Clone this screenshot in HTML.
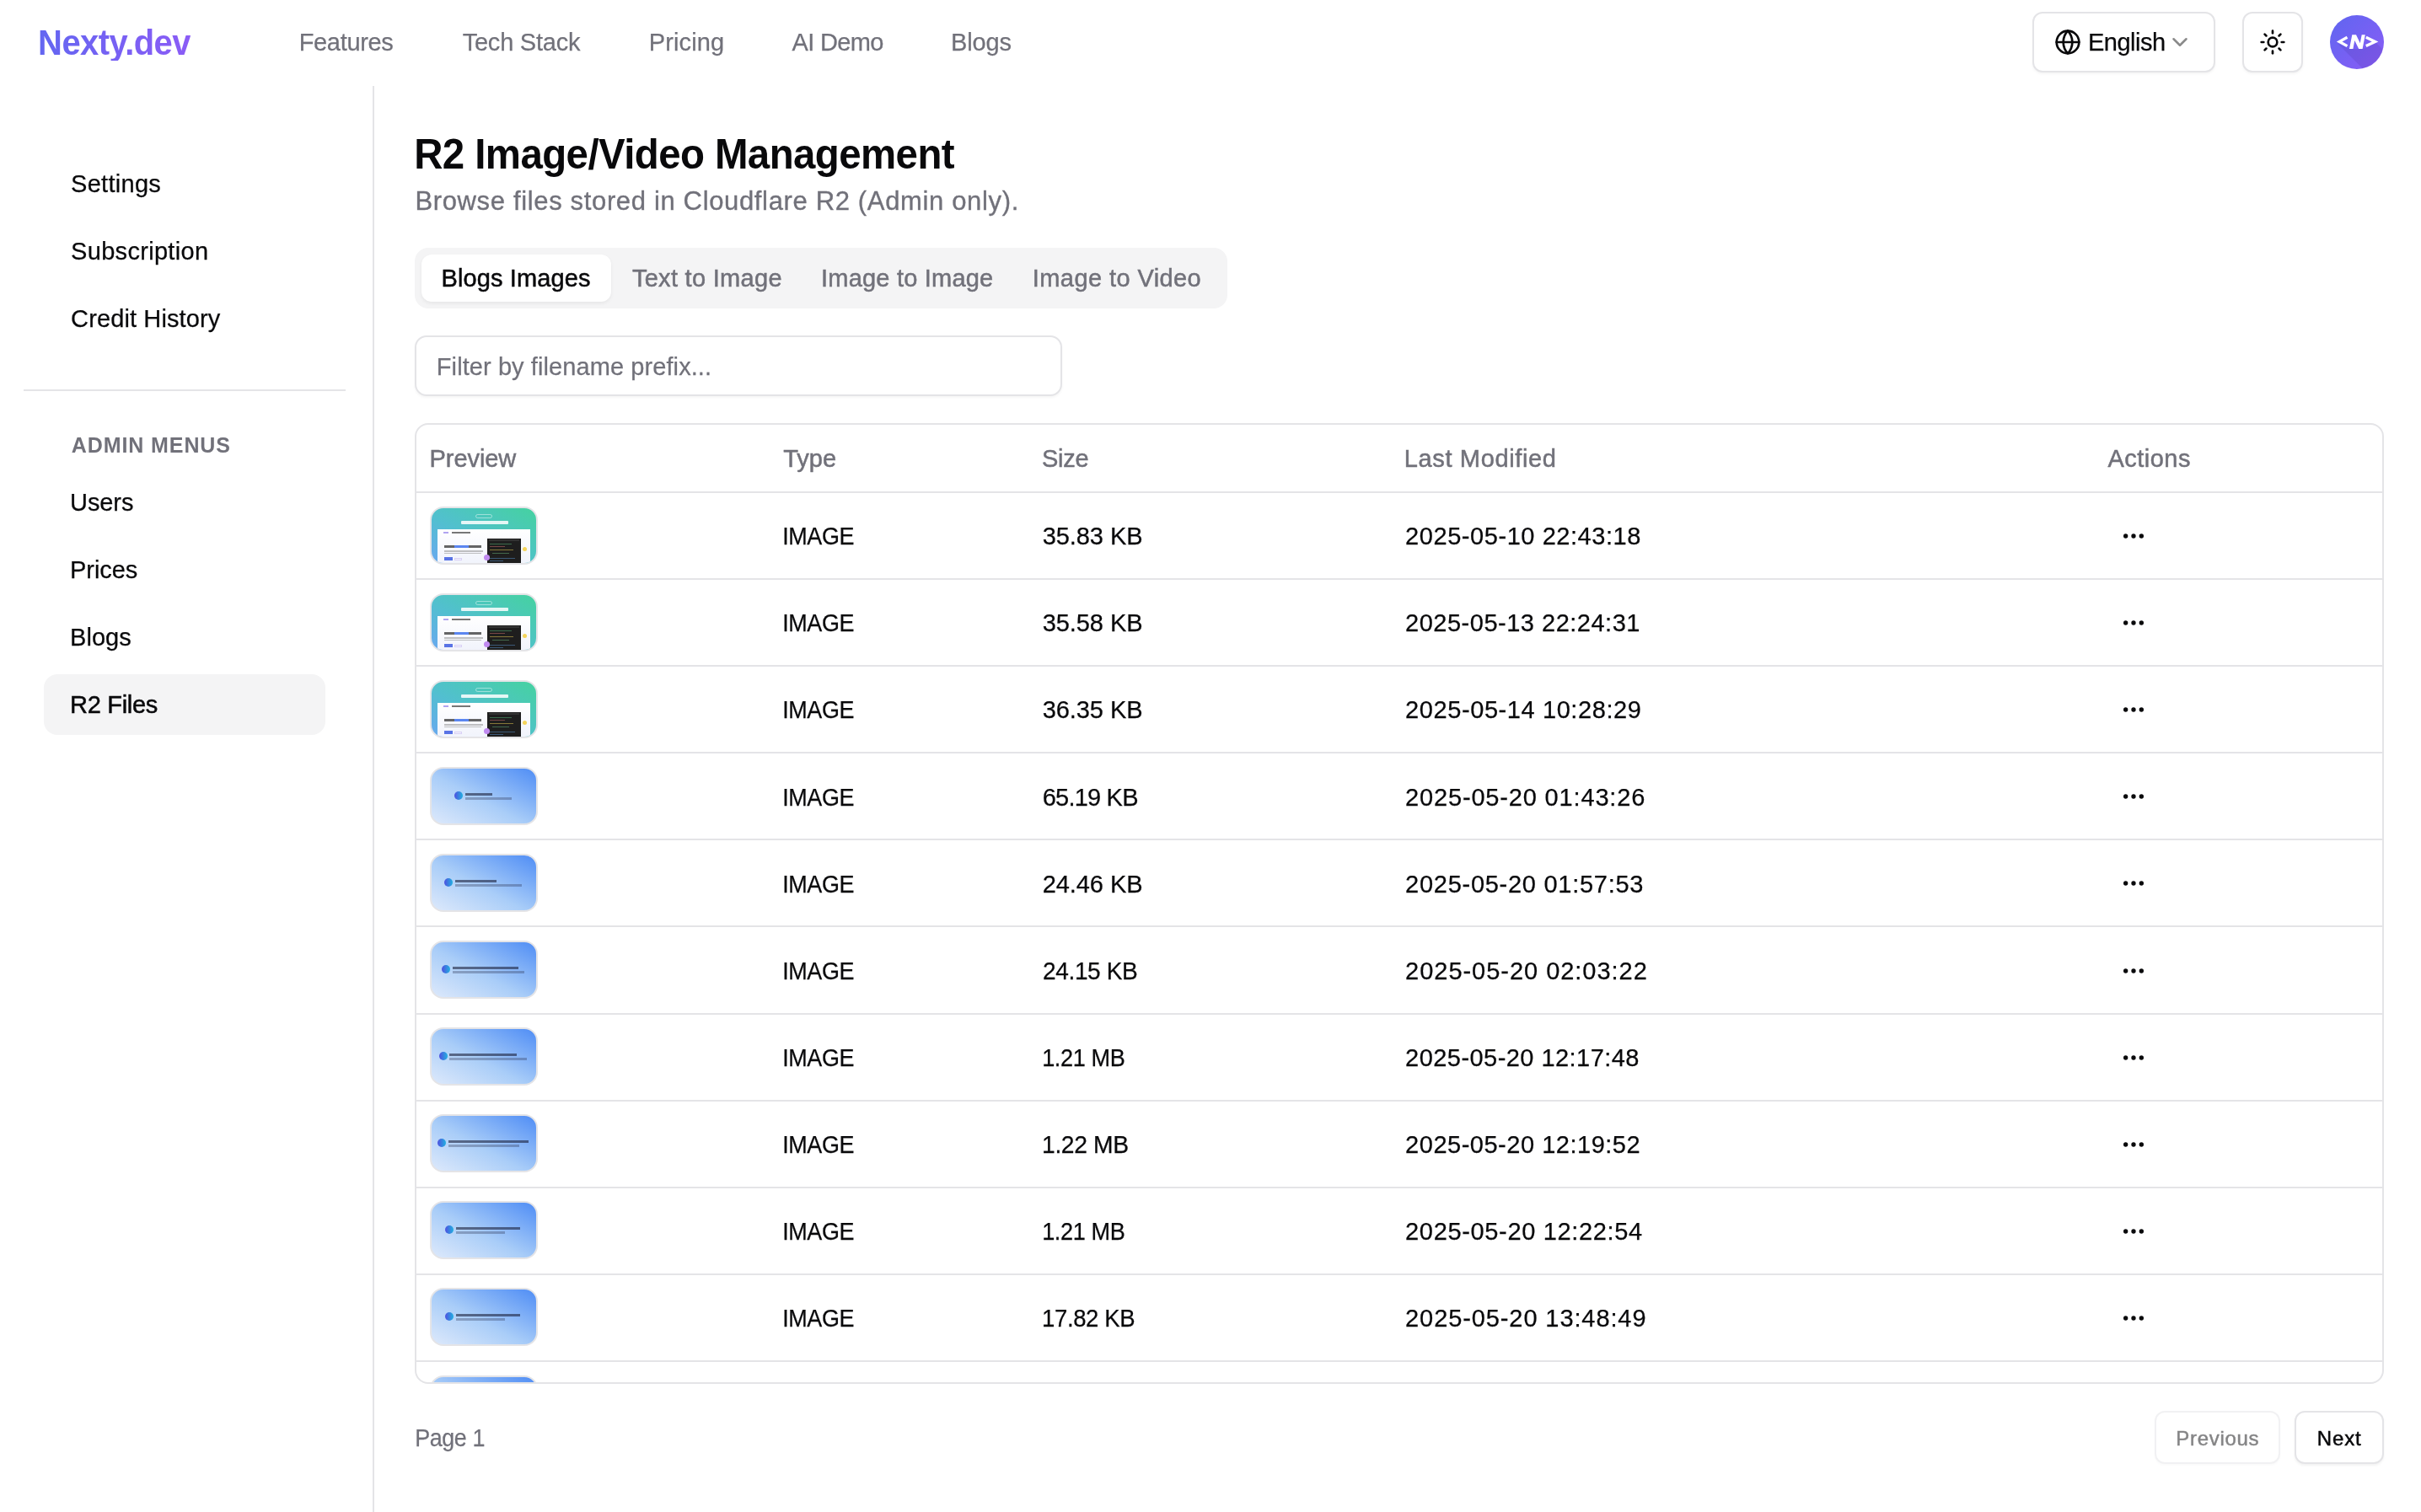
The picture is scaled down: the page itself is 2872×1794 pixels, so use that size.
<!DOCTYPE html><html><head><meta charset="utf-8"><style>
html,body{margin:0;padding:0;background:#fff;overflow:hidden;font-family:"Liberation Sans",sans-serif;}
#root{position:relative;width:2872px;height:1794px;overflow:hidden;will-change:transform;}
@media (max-width:2000px){#root{zoom:0.5;}}
.t{position:absolute;white-space:pre;}
.a{position:absolute;box-sizing:border-box;}
</style></head><body>
<div id="root">

<div class="a" style="left:2411px;top:14px;width:217px;height:72px;border:2px solid #e4e4e7;border-radius:12px;box-shadow:0 2px 3px rgba(0,0,0,0.04);background:#fff"></div>
<div class="a" style="left:2660px;top:14px;width:72px;height:72px;border:2px solid #e4e4e7;border-radius:12px;box-shadow:0 2px 3px rgba(0,0,0,0.04);background:#fff"></div>
<svg class="a" style="left:2437px;top:33.7px" width="32" height="32" viewBox="0 0 24 24" fill="none" stroke="#09090b" stroke-width="2" stroke-linecap="round" stroke-linejoin="round"><circle cx="12" cy="12" r="10"/><path d="M12 2a14.5 14.5 0 0 0 0 20 14.5 14.5 0 0 0 0-20"/><path d="M2 12h20"/></svg>
<svg class="a" style="left:2570.8px;top:34.7px" width="30" height="30" viewBox="0 0 24 24" fill="none" stroke="#8a8a8a" stroke-width="2" stroke-linecap="round" stroke-linejoin="round"><path d="m6 9 6 6 6-6"/></svg>
<svg class="a" style="left:2680px;top:33.6px" width="32" height="32" viewBox="0 0 24 24" fill="none" stroke="#09090b" stroke-width="2" stroke-linecap="round" stroke-linejoin="round"><circle cx="12" cy="12" r="4"/><path d="M12 2v2"/><path d="M12 20v2"/><path d="m4.93 4.93 1.41 1.41"/><path d="m17.66 17.66 1.41 1.41"/><path d="M2 12h2"/><path d="M20 12h2"/><path d="m6.34 17.66-1.41 1.41"/><path d="m19.07 4.93-1.41 1.41"/></svg>
<svg class="a" style="left:2764px;top:18px" width="64" height="64" viewBox="0 0 64 64">
<defs><linearGradient id="avg" x1="0" y1="0" x2="1" y2="1"><stop offset="0" stop-color="#5f66f0"/><stop offset="1" stop-color="#8b5cf6"/></linearGradient>
<clipPath id="avc"><circle cx="32" cy="32" r="32"/></clipPath></defs>
<circle cx="32" cy="32" r="32" fill="url(#avg)"/>
<g clip-path="url(#avc)"><polygon points="9,33.5 20,38.5 23,40 39,40 43,38.5 55,33 105,83 59,83.5" fill="#3a2590" opacity="0.15"/></g>
<g fill="none" stroke="#fff" stroke-width="3.3" stroke-linejoin="miter" stroke-linecap="butt">
<polyline points="20.5,26.2 11.2,31.4 20.5,36.6"/>
<polyline points="42.8,26.2 53.6,31.4 42.8,36.6"/>
</g>
<polygon fill="#fff" points="23.0,40 26.3,23.2 31.0,23.2 35.8,33.2 37.7,23.2 41.8,23.2 38.6,40 34.2,40 29.3,30.0 27.4,40"/>
</svg>
<div class="a" style="left:442px;top:102px;width:2px;height:1692px;background:#e4e4e7"></div>
<div class="a" style="left:28px;top:462px;width:382px;height:2px;background:#e4e4e7"></div>
<div class="a" style="left:52px;top:800px;width:334px;height:72px;background:#f4f4f5;border-radius:16px"></div>
<div class="a" style="left:492px;top:294px;width:964px;height:72px;background:#f4f4f5;border-radius:16px"></div>
<div class="a" style="left:500px;top:302px;width:225px;height:56px;background:#fff;border-radius:12px;box-shadow:0 2px 4px rgba(0,0,0,0.06)"></div>
<div class="a" style="left:492px;top:398px;width:768px;height:72px;border:2px solid #e4e4e7;border-radius:14px;box-shadow:0 2px 3px rgba(0,0,0,0.04);background:#fff"></div>
<div class="a" style="left:492px;top:502px;width:2336px;height:1140px;border:2px solid #e4e4e7;border-radius:16px;overflow:hidden;background:#fff">
<div class="a" style="left:0;top:79px;width:100%;height:2px;background:#e4e4e7"></div>
<div class="a" style="left:0;top:182.00px;width:100%;height:2px;background:#e4e4e7"></div>
<div class="a" style="left:16px;top:97px;width:128px;height:69px;border:2px solid #e4e4e7;border-radius:16px;overflow:hidden;background:linear-gradient(30deg,#6aa8f0 0%,#52bfd0 40%,#45d2a0 100%)">
<div class="a" style="left:52px;top:7px;width:20px;height:5px;border:1px solid rgba(255,255,255,0.45);border-radius:3px"></div>
<div class="a" style="left:35px;top:14.5px;width:56px;height:4px;background:rgba(255,255,255,0.85);border-radius:1px"></div>
<div class="a" style="left:7px;top:25px;width:110px;height:50px;background:linear-gradient(180deg,#ffffff,#eef1fb)"></div>
<div class="a" style="left:14px;top:28px;width:6px;height:1.5px;background:#b0a4f0"></div>
<div class="a" style="left:24px;top:28px;width:22px;height:1.5px;background:#777"></div>
<div class="a" style="left:15px;top:43.5px;width:44px;height:3.5px;background:#333;opacity:.75"></div>
<div class="a" style="left:27px;top:43.5px;width:17px;height:3.5px;background:#5b86f0"></div>
<div class="a" style="left:15px;top:50px;width:46px;height:1.5px;background:#999;opacity:.6"></div>
<div class="a" style="left:15px;top:52.5px;width:44px;height:1.5px;background:#999;opacity:.6"></div>
<div class="a" style="left:15px;top:58px;width:10px;height:4px;background:#3d5ce0;opacity:.85"></div>
<div class="a" style="left:27px;top:58.5px;width:9px;height:3px;border:1px solid #d9d0f5"></div>
<div class="a" style="left:66px;top:36px;width:40px;height:40px;background:#1e1e1e"></div>
<div class="a" style="left:68px;top:37px;width:36px;height:2px;background:#333"></div>
<div class="a" style="left:69px;top:42px;width:26px;height:1px;background:#4f9f6a;opacity:.6"></div>
<div class="a" style="left:69px;top:45px;width:18px;height:1px;background:#b06060;opacity:.6"></div>
<div class="a" style="left:69px;top:49px;width:28px;height:1px;background:#c9b34a;opacity:.6"></div>
<div class="a" style="left:72px;top:53px;width:20px;height:1px;background:#5a9a6a;opacity:.6"></div>
<div class="a" style="left:69px;top:59px;width:30px;height:1px;background:#4f7fb0;opacity:.6"></div>
<div class="a" style="left:69px;top:62px;width:16px;height:1px;background:#4f7fb0;opacity:.6"></div>
<div class="a" style="left:61.5px;top:55px;width:7px;height:7px;border-radius:50%;background:#c08af0"></div>
<div class="a" style="left:108px;top:45.5px;width:5px;height:5px;border-radius:50%;background:#f5d45a"></div>
</div>
<svg class="a" style="left:2021px;top:116.00px" width="32" height="32" viewBox="0 0 24 24" fill="#09090b" stroke="#09090b" stroke-width="1"><circle cx="5" cy="12" r="1.5"/><circle cx="12" cy="12" r="1.5"/><circle cx="19" cy="12" r="1.5"/></svg>
<div class="a" style="left:0;top:285.10px;width:100%;height:2px;background:#e4e4e7"></div>
<div class="a" style="left:16px;top:200px;width:128px;height:69px;border:2px solid #e4e4e7;border-radius:16px;overflow:hidden;background:linear-gradient(30deg,#6aa8f0 0%,#52bfd0 40%,#45d2a0 100%)">
<div class="a" style="left:52px;top:7px;width:20px;height:5px;border:1px solid rgba(255,255,255,0.45);border-radius:3px"></div>
<div class="a" style="left:35px;top:14.5px;width:56px;height:4px;background:rgba(255,255,255,0.85);border-radius:1px"></div>
<div class="a" style="left:7px;top:25px;width:110px;height:50px;background:linear-gradient(180deg,#ffffff,#eef1fb)"></div>
<div class="a" style="left:14px;top:28px;width:6px;height:1.5px;background:#b0a4f0"></div>
<div class="a" style="left:24px;top:28px;width:22px;height:1.5px;background:#777"></div>
<div class="a" style="left:15px;top:43.5px;width:44px;height:3.5px;background:#333;opacity:.75"></div>
<div class="a" style="left:27px;top:43.5px;width:17px;height:3.5px;background:#5b86f0"></div>
<div class="a" style="left:15px;top:50px;width:46px;height:1.5px;background:#999;opacity:.6"></div>
<div class="a" style="left:15px;top:52.5px;width:44px;height:1.5px;background:#999;opacity:.6"></div>
<div class="a" style="left:15px;top:58px;width:10px;height:4px;background:#3d5ce0;opacity:.85"></div>
<div class="a" style="left:27px;top:58.5px;width:9px;height:3px;border:1px solid #d9d0f5"></div>
<div class="a" style="left:66px;top:36px;width:40px;height:40px;background:#1e1e1e"></div>
<div class="a" style="left:68px;top:37px;width:36px;height:2px;background:#333"></div>
<div class="a" style="left:69px;top:42px;width:26px;height:1px;background:#4f9f6a;opacity:.6"></div>
<div class="a" style="left:69px;top:45px;width:18px;height:1px;background:#b06060;opacity:.6"></div>
<div class="a" style="left:69px;top:49px;width:28px;height:1px;background:#c9b34a;opacity:.6"></div>
<div class="a" style="left:72px;top:53px;width:20px;height:1px;background:#5a9a6a;opacity:.6"></div>
<div class="a" style="left:69px;top:59px;width:30px;height:1px;background:#4f7fb0;opacity:.6"></div>
<div class="a" style="left:69px;top:62px;width:16px;height:1px;background:#4f7fb0;opacity:.6"></div>
<div class="a" style="left:61.5px;top:55px;width:7px;height:7px;border-radius:50%;background:#c08af0"></div>
<div class="a" style="left:108px;top:45.5px;width:5px;height:5px;border-radius:50%;background:#f5d45a"></div>
</div>
<svg class="a" style="left:2021px;top:219.10px" width="32" height="32" viewBox="0 0 24 24" fill="#09090b" stroke="#09090b" stroke-width="1"><circle cx="5" cy="12" r="1.5"/><circle cx="12" cy="12" r="1.5"/><circle cx="19" cy="12" r="1.5"/></svg>
<div class="a" style="left:0;top:388.20px;width:100%;height:2px;background:#e4e4e7"></div>
<div class="a" style="left:16px;top:303px;width:128px;height:69px;border:2px solid #e4e4e7;border-radius:16px;overflow:hidden;background:linear-gradient(30deg,#6aa8f0 0%,#52bfd0 40%,#45d2a0 100%)">
<div class="a" style="left:52px;top:7px;width:20px;height:5px;border:1px solid rgba(255,255,255,0.45);border-radius:3px"></div>
<div class="a" style="left:35px;top:14.5px;width:56px;height:4px;background:rgba(255,255,255,0.85);border-radius:1px"></div>
<div class="a" style="left:7px;top:25px;width:110px;height:50px;background:linear-gradient(180deg,#ffffff,#eef1fb)"></div>
<div class="a" style="left:14px;top:28px;width:6px;height:1.5px;background:#b0a4f0"></div>
<div class="a" style="left:24px;top:28px;width:22px;height:1.5px;background:#777"></div>
<div class="a" style="left:15px;top:43.5px;width:44px;height:3.5px;background:#333;opacity:.75"></div>
<div class="a" style="left:27px;top:43.5px;width:17px;height:3.5px;background:#5b86f0"></div>
<div class="a" style="left:15px;top:50px;width:46px;height:1.5px;background:#999;opacity:.6"></div>
<div class="a" style="left:15px;top:52.5px;width:44px;height:1.5px;background:#999;opacity:.6"></div>
<div class="a" style="left:15px;top:58px;width:10px;height:4px;background:#3d5ce0;opacity:.85"></div>
<div class="a" style="left:27px;top:58.5px;width:9px;height:3px;border:1px solid #d9d0f5"></div>
<div class="a" style="left:66px;top:36px;width:40px;height:40px;background:#1e1e1e"></div>
<div class="a" style="left:68px;top:37px;width:36px;height:2px;background:#333"></div>
<div class="a" style="left:69px;top:42px;width:26px;height:1px;background:#4f9f6a;opacity:.6"></div>
<div class="a" style="left:69px;top:45px;width:18px;height:1px;background:#b06060;opacity:.6"></div>
<div class="a" style="left:69px;top:49px;width:28px;height:1px;background:#c9b34a;opacity:.6"></div>
<div class="a" style="left:72px;top:53px;width:20px;height:1px;background:#5a9a6a;opacity:.6"></div>
<div class="a" style="left:69px;top:59px;width:30px;height:1px;background:#4f7fb0;opacity:.6"></div>
<div class="a" style="left:69px;top:62px;width:16px;height:1px;background:#4f7fb0;opacity:.6"></div>
<div class="a" style="left:61.5px;top:55px;width:7px;height:7px;border-radius:50%;background:#c08af0"></div>
<div class="a" style="left:108px;top:45.5px;width:5px;height:5px;border-radius:50%;background:#f5d45a"></div>
</div>
<svg class="a" style="left:2021px;top:322.20px" width="32" height="32" viewBox="0 0 24 24" fill="#09090b" stroke="#09090b" stroke-width="1"><circle cx="5" cy="12" r="1.5"/><circle cx="12" cy="12" r="1.5"/><circle cx="19" cy="12" r="1.5"/></svg>
<div class="a" style="left:0;top:491.30px;width:100%;height:2px;background:#e4e4e7"></div>
<div class="a" style="left:16px;top:406px;width:128px;height:69px;border:2px solid #e4e4e7;border-radius:16px;overflow:hidden;background:linear-gradient(28deg,#dde9fb 0%,#a9cdf8 45%,#4f8df5 100%)">
<div class="a" style="left:27.4px;top:27px;width:10px;height:10px;border-radius:50%;background:linear-gradient(90deg,#4f50e0,#22b0e0)"></div>
<div class="a" style="left:40px;top:28.5px;width:32px;height:3px;background:#1a1f3a;opacity:.6"></div>
<div class="a" style="left:40px;top:34px;width:55px;height:2.5px;background:#2a3050;opacity:.33"></div>
</div>
<svg class="a" style="left:2021px;top:425.30px" width="32" height="32" viewBox="0 0 24 24" fill="#09090b" stroke="#09090b" stroke-width="1"><circle cx="5" cy="12" r="1.5"/><circle cx="12" cy="12" r="1.5"/><circle cx="19" cy="12" r="1.5"/></svg>
<div class="a" style="left:0;top:594.40px;width:100%;height:2px;background:#e4e4e7"></div>
<div class="a" style="left:16px;top:509px;width:128px;height:69px;border:2px solid #e4e4e7;border-radius:16px;overflow:hidden;background:linear-gradient(28deg,#dde9fb 0%,#a9cdf8 45%,#4f8df5 100%)">
<div class="a" style="left:15.3px;top:27px;width:10px;height:10px;border-radius:50%;background:linear-gradient(90deg,#4f50e0,#22b0e0)"></div>
<div class="a" style="left:28.4px;top:28.5px;width:49px;height:3px;background:#1a1f3a;opacity:.6"></div>
<div class="a" style="left:28.4px;top:34px;width:79px;height:2.5px;background:#2a3050;opacity:.33"></div>
</div>
<svg class="a" style="left:2021px;top:528.40px" width="32" height="32" viewBox="0 0 24 24" fill="#09090b" stroke="#09090b" stroke-width="1"><circle cx="5" cy="12" r="1.5"/><circle cx="12" cy="12" r="1.5"/><circle cx="19" cy="12" r="1.5"/></svg>
<div class="a" style="left:0;top:697.50px;width:100%;height:2px;background:#e4e4e7"></div>
<div class="a" style="left:16px;top:612px;width:128px;height:69px;border:2px solid #e4e4e7;border-radius:16px;overflow:hidden;background:linear-gradient(28deg,#dde9fb 0%,#a9cdf8 45%,#4f8df5 100%)">
<div class="a" style="left:12px;top:27px;width:10px;height:10px;border-radius:50%;background:linear-gradient(90deg,#4f50e0,#22b0e0)"></div>
<div class="a" style="left:25px;top:28.5px;width:78px;height:3px;background:#1a1f3a;opacity:.6"></div>
<div class="a" style="left:25px;top:34px;width:85px;height:2.5px;background:#2a3050;opacity:.33"></div>
</div>
<svg class="a" style="left:2021px;top:631.50px" width="32" height="32" viewBox="0 0 24 24" fill="#09090b" stroke="#09090b" stroke-width="1"><circle cx="5" cy="12" r="1.5"/><circle cx="12" cy="12" r="1.5"/><circle cx="19" cy="12" r="1.5"/></svg>
<div class="a" style="left:0;top:800.60px;width:100%;height:2px;background:#e4e4e7"></div>
<div class="a" style="left:16px;top:715px;width:128px;height:69px;border:2px solid #e4e4e7;border-radius:16px;overflow:hidden;background:linear-gradient(28deg,#dde9fb 0%,#a9cdf8 45%,#4f8df5 100%)">
<div class="a" style="left:9px;top:27px;width:10px;height:10px;border-radius:50%;background:linear-gradient(90deg,#4f50e0,#22b0e0)"></div>
<div class="a" style="left:21.4px;top:28.5px;width:80px;height:3px;background:#1a1f3a;opacity:.6"></div>
<div class="a" style="left:21.4px;top:34px;width:92px;height:2.5px;background:#2a3050;opacity:.33"></div>
</div>
<svg class="a" style="left:2021px;top:734.60px" width="32" height="32" viewBox="0 0 24 24" fill="#09090b" stroke="#09090b" stroke-width="1"><circle cx="5" cy="12" r="1.5"/><circle cx="12" cy="12" r="1.5"/><circle cx="19" cy="12" r="1.5"/></svg>
<div class="a" style="left:0;top:903.70px;width:100%;height:2px;background:#e4e4e7"></div>
<div class="a" style="left:16px;top:818px;width:128px;height:69px;border:2px solid #e4e4e7;border-radius:16px;overflow:hidden;background:linear-gradient(28deg,#dde9fb 0%,#a9cdf8 45%,#4f8df5 100%)">
<div class="a" style="left:7.4px;top:27px;width:10px;height:10px;border-radius:50%;background:linear-gradient(90deg,#4f50e0,#22b0e0)"></div>
<div class="a" style="left:20px;top:28.5px;width:95px;height:3px;background:#1a1f3a;opacity:.6"></div>
<div class="a" style="left:20px;top:34px;width:84px;height:2.5px;background:#2a3050;opacity:.33"></div>
</div>
<svg class="a" style="left:2021px;top:837.70px" width="32" height="32" viewBox="0 0 24 24" fill="#09090b" stroke="#09090b" stroke-width="1"><circle cx="5" cy="12" r="1.5"/><circle cx="12" cy="12" r="1.5"/><circle cx="19" cy="12" r="1.5"/></svg>
<div class="a" style="left:0;top:1006.80px;width:100%;height:2px;background:#e4e4e7"></div>
<div class="a" style="left:16px;top:921px;width:128px;height:69px;border:2px solid #e4e4e7;border-radius:16px;overflow:hidden;background:linear-gradient(28deg,#dde9fb 0%,#a9cdf8 45%,#4f8df5 100%)">
<div class="a" style="left:16.4px;top:27px;width:10px;height:10px;border-radius:50%;background:linear-gradient(90deg,#4f50e0,#22b0e0)"></div>
<div class="a" style="left:29px;top:28.5px;width:76px;height:3px;background:#1a1f3a;opacity:.6"></div>
<div class="a" style="left:29px;top:34px;width:58px;height:2.5px;background:#2a3050;opacity:.33"></div>
</div>
<svg class="a" style="left:2021px;top:940.80px" width="32" height="32" viewBox="0 0 24 24" fill="#09090b" stroke="#09090b" stroke-width="1"><circle cx="5" cy="12" r="1.5"/><circle cx="12" cy="12" r="1.5"/><circle cx="19" cy="12" r="1.5"/></svg>
<div class="a" style="left:0;top:1109.90px;width:100%;height:2px;background:#e4e4e7"></div>
<div class="a" style="left:16px;top:1024px;width:128px;height:69px;border:2px solid #e4e4e7;border-radius:16px;overflow:hidden;background:linear-gradient(28deg,#dde9fb 0%,#a9cdf8 45%,#4f8df5 100%)">
<div class="a" style="left:16.4px;top:27px;width:10px;height:10px;border-radius:50%;background:linear-gradient(90deg,#4f50e0,#22b0e0)"></div>
<div class="a" style="left:29px;top:28.5px;width:76px;height:3px;background:#1a1f3a;opacity:.6"></div>
<div class="a" style="left:29px;top:34px;width:58px;height:2.5px;background:#2a3050;opacity:.33"></div>
</div>
<svg class="a" style="left:2021px;top:1043.90px" width="32" height="32" viewBox="0 0 24 24" fill="#09090b" stroke="#09090b" stroke-width="1"><circle cx="5" cy="12" r="1.5"/><circle cx="12" cy="12" r="1.5"/><circle cx="19" cy="12" r="1.5"/></svg>
<div class="a" style="left:16px;top:1128px;width:128px;height:69px;border:2px solid #e4e4e7;border-radius:16px;overflow:hidden;background:linear-gradient(28deg,#dde9fb 0%,#a9cdf8 45%,#4f8df5 100%)">
<div class="a" style="left:16.4px;top:27px;width:10px;height:10px;border-radius:50%;background:linear-gradient(90deg,#4f50e0,#22b0e0)"></div>
<div class="a" style="left:29px;top:28.5px;width:76px;height:3px;background:#1a1f3a;opacity:.6"></div>
<div class="a" style="left:29px;top:34px;width:58px;height:2.5px;background:#2a3050;opacity:.33"></div>
</div>
</div>
<div class="a" style="left:2556px;top:1674px;width:149px;height:63px;border:2px solid #e4e4e7;border-radius:12px;box-shadow:0 2px 3px rgba(0,0,0,0.04);background:#fff;opacity:.5"></div>
<div class="a" style="left:2722px;top:1674px;width:106px;height:63px;border:2px solid #e4e4e7;border-radius:12px;box-shadow:0 2px 3px rgba(0,0,0,0.05);background:#fff"></div>
<div class="t" style="left:44.80px;top:30.00px;font-size:42px;line-height:42px;font-weight:700;color:#6d63f3;letter-spacing:-0.600px;transform:scaleX(0.9516);transform-origin:2.00px 0;background:linear-gradient(90deg,#6366f1,#8b5cf6);-webkit-background-clip:text;background-clip:text;color:transparent;">Nexty.dev</div>
<div class="t" style="left:354.70px;top:36.00px;font-size:29px;line-height:29px;font-weight:400;color:#71717a;letter-spacing:-0.335px;-webkit-text-stroke:0.25px #71717a;">Features</div>
<div class="t" style="left:548.70px;top:36.00px;font-size:29px;line-height:29px;font-weight:400;color:#71717a;letter-spacing:-0.227px;-webkit-text-stroke:0.25px #71717a;">Tech Stack</div>
<div class="t" style="left:769.80px;top:36.00px;font-size:29px;line-height:29px;font-weight:400;color:#71717a;letter-spacing:0.098px;-webkit-text-stroke:0.25px #71717a;">Pricing</div>
<div class="t" style="left:939.60px;top:36.00px;font-size:29px;line-height:29px;font-weight:400;color:#71717a;letter-spacing:-0.664px;-webkit-text-stroke:0.25px #71717a;">AI Demo</div>
<div class="t" style="left:1128.10px;top:36.00px;font-size:29px;line-height:29px;font-weight:400;color:#71717a;letter-spacing:-0.161px;-webkit-text-stroke:0.25px #71717a;">Blogs</div>
<div class="t" style="left:2477.00px;top:36.00px;font-size:29px;line-height:29px;font-weight:400;color:#09090b;letter-spacing:-0.498px;-webkit-text-stroke:0.25px #09090b;">English</div>
<div class="t" style="left:84.10px;top:204.00px;font-size:29px;line-height:29px;font-weight:400;color:#09090b;letter-spacing:0.274px;-webkit-text-stroke:0.25px #09090b;">Settings</div>
<div class="t" style="left:84.10px;top:284.00px;font-size:29px;line-height:29px;font-weight:400;color:#09090b;letter-spacing:0.304px;-webkit-text-stroke:0.25px #09090b;">Subscription</div>
<div class="t" style="left:84.10px;top:364.00px;font-size:29px;line-height:29px;font-weight:400;color:#09090b;letter-spacing:0.120px;-webkit-text-stroke:0.25px #09090b;">Credit History</div>
<div class="t" style="left:83.10px;top:582.00px;font-size:29px;line-height:29px;font-weight:400;color:#09090b;letter-spacing:-0.107px;-webkit-text-stroke:0.25px #09090b;">Users</div>
<div class="t" style="left:83.10px;top:662.00px;font-size:29px;line-height:29px;font-weight:400;color:#09090b;letter-spacing:-0.074px;-webkit-text-stroke:0.25px #09090b;">Prices</div>
<div class="t" style="left:83.10px;top:742.00px;font-size:29px;line-height:29px;font-weight:400;color:#09090b;letter-spacing:0.039px;-webkit-text-stroke:0.25px #09090b;">Blogs</div>
<div class="t" style="left:83.10px;top:822.00px;font-size:29px;line-height:29px;font-weight:400;color:#09090b;letter-spacing:-0.322px;-webkit-text-stroke:0.5px #09090b;">R2 Files</div>
<div class="t" style="left:84.80px;top:516.00px;font-size:25px;line-height:25px;font-weight:700;color:#71717a;letter-spacing:0.901px;">ADMIN MENUS</div>
<div class="t" style="left:491.40px;top:158.00px;font-size:50px;line-height:50px;font-weight:700;color:#09090b;letter-spacing:-0.600px;transform:scaleX(0.9481);transform-origin:3.00px 0;">R2 Image/Video Management</div>
<div class="t" style="left:492.40px;top:223.00px;font-size:31px;line-height:31px;font-weight:400;color:#71717a;letter-spacing:0.651px;-webkit-text-stroke:0.35px #71717a;">Browse files stored in Cloudflare R2 (Admin only).</div>
<div class="t" style="left:523.50px;top:316.00px;font-size:29px;line-height:29px;font-weight:400;color:#09090b;letter-spacing:0.127px;-webkit-text-stroke:0.5px #09090b;">Blogs Images</div>
<div class="t" style="left:749.90px;top:316.00px;font-size:29px;line-height:29px;font-weight:400;color:#71717a;letter-spacing:0.295px;-webkit-text-stroke:0.5px #71717a;">Text to Image</div>
<div class="t" style="left:974.10px;top:316.00px;font-size:29px;line-height:29px;font-weight:400;color:#71717a;letter-spacing:0.202px;-webkit-text-stroke:0.5px #71717a;">Image to Image</div>
<div class="t" style="left:1224.80px;top:316.00px;font-size:29px;line-height:29px;font-weight:400;color:#71717a;letter-spacing:0.414px;-webkit-text-stroke:0.5px #71717a;">Image to Video</div>
<div class="t" style="left:517.80px;top:421.00px;font-size:29px;line-height:29px;font-weight:400;color:#71717a;letter-spacing:0.086px;-webkit-text-stroke:0.25px #71717a;">Filter by filename prefix...</div>
<div class="t" style="left:509.60px;top:530.00px;font-size:29px;line-height:29px;font-weight:400;color:#71717a;letter-spacing:-0.083px;-webkit-text-stroke:0.5px #71717a;">Preview</div>
<div class="t" style="left:929.20px;top:530.00px;font-size:29px;line-height:29px;font-weight:400;color:#71717a;letter-spacing:0.000px;-webkit-text-stroke:0.5px #71717a;">Type</div>
<div class="t" style="left:1236.00px;top:530.00px;font-size:29px;line-height:29px;font-weight:400;color:#71717a;letter-spacing:-0.262px;-webkit-text-stroke:0.5px #71717a;">Size</div>
<div class="t" style="left:1665.80px;top:530.00px;font-size:29px;line-height:29px;font-weight:400;color:#71717a;letter-spacing:0.637px;-webkit-text-stroke:0.5px #71717a;">Last Modified</div>
<div class="t" style="left:2500.50px;top:530.00px;font-size:29px;line-height:29px;font-weight:400;color:#71717a;letter-spacing:0.467px;-webkit-text-stroke:0.5px #71717a;">Actions</div>
<div class="t" style="left:927.60px;top:622.00px;font-size:29px;line-height:29px;font-weight:400;color:#09090b;letter-spacing:-0.400px;-webkit-text-stroke:0.25px #09090b;transform:scaleX(0.9283);transform-origin:2.00px 0;">IMAGE</div>
<div class="t" style="left:1236.70px;top:622.00px;font-size:29px;line-height:29px;font-weight:400;color:#09090b;letter-spacing:-0.067px;-webkit-text-stroke:0.25px #09090b;">35.83 KB</div>
<div class="t" style="left:1667.10px;top:622.00px;font-size:29px;line-height:29px;font-weight:400;color:#09090b;letter-spacing:0.558px;-webkit-text-stroke:0.25px #09090b;">2025-05-10 22:43:18</div>
<div class="t" style="left:927.60px;top:725.00px;font-size:29px;line-height:29px;font-weight:400;color:#09090b;letter-spacing:-0.400px;-webkit-text-stroke:0.25px #09090b;transform:scaleX(0.9283);transform-origin:2.00px 0;">IMAGE</div>
<div class="t" style="left:1236.70px;top:725.00px;font-size:29px;line-height:29px;font-weight:400;color:#09090b;letter-spacing:-0.067px;-webkit-text-stroke:0.25px #09090b;">35.58 KB</div>
<div class="t" style="left:1667.10px;top:725.00px;font-size:29px;line-height:29px;font-weight:400;color:#09090b;letter-spacing:0.502px;-webkit-text-stroke:0.25px #09090b;">2025-05-13 22:24:31</div>
<div class="t" style="left:927.60px;top:828.00px;font-size:29px;line-height:29px;font-weight:400;color:#09090b;letter-spacing:-0.400px;-webkit-text-stroke:0.25px #09090b;transform:scaleX(0.9283);transform-origin:2.00px 0;">IMAGE</div>
<div class="t" style="left:1236.70px;top:828.00px;font-size:29px;line-height:29px;font-weight:400;color:#09090b;letter-spacing:-0.067px;-webkit-text-stroke:0.25px #09090b;">36.35 KB</div>
<div class="t" style="left:1667.10px;top:828.00px;font-size:29px;line-height:29px;font-weight:400;color:#09090b;letter-spacing:0.586px;-webkit-text-stroke:0.25px #09090b;">2025-05-14 10:28:29</div>
<div class="t" style="left:927.60px;top:932.00px;font-size:29px;line-height:29px;font-weight:400;color:#09090b;letter-spacing:-0.400px;-webkit-text-stroke:0.25px #09090b;transform:scaleX(0.9283);transform-origin:2.00px 0;">IMAGE</div>
<div class="t" style="left:1236.70px;top:932.00px;font-size:29px;line-height:29px;font-weight:400;color:#09090b;letter-spacing:-0.782px;-webkit-text-stroke:0.25px #09090b;">65.19 KB</div>
<div class="t" style="left:1667.10px;top:932.00px;font-size:29px;line-height:29px;font-weight:400;color:#09090b;letter-spacing:0.830px;-webkit-text-stroke:0.25px #09090b;">2025-05-20 01:43:26</div>
<div class="t" style="left:927.60px;top:1035.00px;font-size:29px;line-height:29px;font-weight:400;color:#09090b;letter-spacing:-0.400px;-webkit-text-stroke:0.25px #09090b;transform:scaleX(0.9283);transform-origin:2.00px 0;">IMAGE</div>
<div class="t" style="left:1236.70px;top:1035.00px;font-size:29px;line-height:29px;font-weight:400;color:#09090b;letter-spacing:-0.067px;-webkit-text-stroke:0.25px #09090b;">24.46 KB</div>
<div class="t" style="left:1667.10px;top:1035.00px;font-size:29px;line-height:29px;font-weight:400;color:#09090b;letter-spacing:0.725px;-webkit-text-stroke:0.25px #09090b;">2025-05-20 01:57:53</div>
<div class="t" style="left:927.60px;top:1138.00px;font-size:29px;line-height:29px;font-weight:400;color:#09090b;letter-spacing:-0.400px;-webkit-text-stroke:0.25px #09090b;transform:scaleX(0.9283);transform-origin:2.00px 0;">IMAGE</div>
<div class="t" style="left:1236.70px;top:1138.00px;font-size:29px;line-height:29px;font-weight:400;color:#09090b;letter-spacing:-0.400px;-webkit-text-stroke:0.25px #09090b;transform:scaleX(0.9678);transform-origin:1.00px 0;">24.15 KB</div>
<div class="t" style="left:1667.10px;top:1138.00px;font-size:29px;line-height:29px;font-weight:400;color:#09090b;letter-spacing:0.969px;-webkit-text-stroke:0.25px #09090b;">2025-05-20 02:03:22</div>
<div class="t" style="left:927.60px;top:1241.00px;font-size:29px;line-height:29px;font-weight:400;color:#09090b;letter-spacing:-0.400px;-webkit-text-stroke:0.25px #09090b;transform:scaleX(0.9283);transform-origin:2.00px 0;">IMAGE</div>
<div class="t" style="left:1235.70px;top:1241.00px;font-size:29px;line-height:29px;font-weight:400;color:#09090b;letter-spacing:-0.400px;-webkit-text-stroke:0.25px #09090b;transform:scaleX(0.9349);transform-origin:2.00px 0;">1.21 MB</div>
<div class="t" style="left:1667.10px;top:1241.00px;font-size:29px;line-height:29px;font-weight:400;color:#09090b;letter-spacing:0.447px;-webkit-text-stroke:0.25px #09090b;">2025-05-20 12:17:48</div>
<div class="t" style="left:927.60px;top:1344.00px;font-size:29px;line-height:29px;font-weight:400;color:#09090b;letter-spacing:-0.400px;-webkit-text-stroke:0.25px #09090b;transform:scaleX(0.9283);transform-origin:2.00px 0;">IMAGE</div>
<div class="t" style="left:1235.70px;top:1344.00px;font-size:29px;line-height:29px;font-weight:400;color:#09090b;letter-spacing:-0.400px;-webkit-text-stroke:0.25px #09090b;transform:scaleX(0.9750);transform-origin:2.00px 0;">1.22 MB</div>
<div class="t" style="left:1667.10px;top:1344.00px;font-size:29px;line-height:29px;font-weight:400;color:#09090b;letter-spacing:0.514px;-webkit-text-stroke:0.25px #09090b;">2025-05-20 12:19:52</div>
<div class="t" style="left:927.60px;top:1447.00px;font-size:29px;line-height:29px;font-weight:400;color:#09090b;letter-spacing:-0.400px;-webkit-text-stroke:0.25px #09090b;transform:scaleX(0.9283);transform-origin:2.00px 0;">IMAGE</div>
<div class="t" style="left:1235.70px;top:1447.00px;font-size:29px;line-height:29px;font-weight:400;color:#09090b;letter-spacing:-0.400px;-webkit-text-stroke:0.25px #09090b;transform:scaleX(0.9349);transform-origin:2.00px 0;">1.21 MB</div>
<div class="t" style="left:1667.10px;top:1447.00px;font-size:29px;line-height:29px;font-weight:400;color:#09090b;letter-spacing:0.652px;-webkit-text-stroke:0.25px #09090b;">2025-05-20 12:22:54</div>
<div class="t" style="left:927.60px;top:1550.00px;font-size:29px;line-height:29px;font-weight:400;color:#09090b;letter-spacing:-0.400px;-webkit-text-stroke:0.25px #09090b;transform:scaleX(0.9283);transform-origin:2.00px 0;">IMAGE</div>
<div class="t" style="left:1235.70px;top:1550.00px;font-size:29px;line-height:29px;font-weight:400;color:#09090b;letter-spacing:-0.400px;-webkit-text-stroke:0.25px #09090b;transform:scaleX(0.9481);transform-origin:2.00px 0;">17.82 KB</div>
<div class="t" style="left:1667.10px;top:1550.00px;font-size:29px;line-height:29px;font-weight:400;color:#09090b;letter-spacing:0.897px;-webkit-text-stroke:0.25px #09090b;">2025-05-20 13:48:49</div>
<div class="t" style="left:492.00px;top:1692.00px;font-size:29px;line-height:29px;font-weight:400;color:#71717a;letter-spacing:-0.400px;-webkit-text-stroke:0.25px #71717a;transform:scaleX(0.9264);transform-origin:2.00px 0;">Page 1</div>
<div class="t" style="left:2581.30px;top:1695.00px;font-size:24px;line-height:24px;font-weight:400;color:#09090b;letter-spacing:0.704px;-webkit-text-stroke:0.5px #09090b;opacity:.5;">Previous</div>
<div class="t" style="left:2748.80px;top:1695.00px;font-size:24px;line-height:24px;font-weight:400;color:#09090b;letter-spacing:0.840px;-webkit-text-stroke:0.5px #09090b;">Next</div>
</div></body></html>
